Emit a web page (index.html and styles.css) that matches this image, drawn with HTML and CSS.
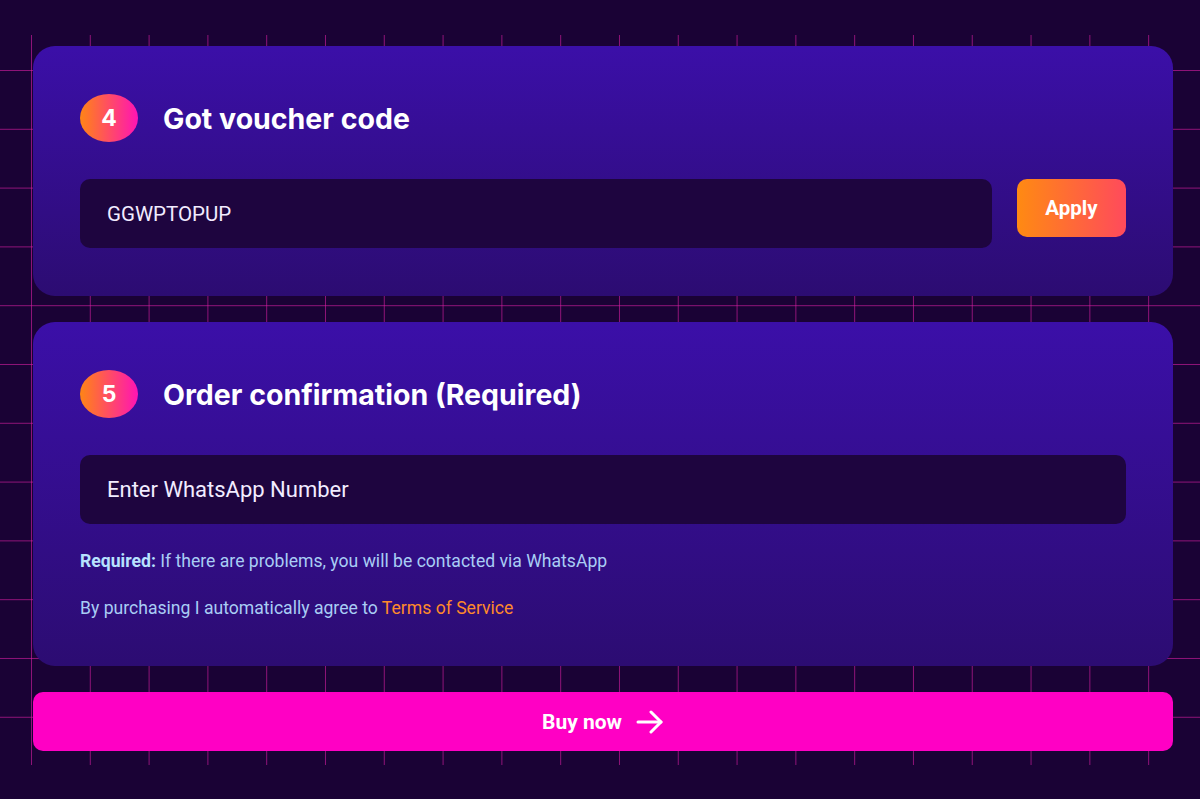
FILE: index.html
```html
<!DOCTYPE html>
<html lang="en">

<head>
    <meta charset="UTF-8">
    <title>Checkout</title>
    <meta name="viewport" content="width=device-width, initial-scale=1.0">
    <link rel="stylesheet" href="styles.css">
</head>

<body>
    <div class="grid-bg">
        <div class="checkout">
            <section class="card">
                <div class="step-head">
                    <span class="step-num">4</span>
                    <h2>Got voucher code</h2>
                </div>
                <div class="voucher-row">
                    <div class="field field-code">GGWPTOPUP</div>
                    <button class="btn-apply">Apply</button>
                </div>
            </section>

            <section class="card card-confirm">
                <div class="step-head">
                    <span class="step-num">5</span>
                    <h2>Order confirmation (Required)</h2>
                </div>
                <div class="field">Enter WhatsApp Number</div>
                <p class="note"><b>Required:</b> If there are problems, you will be contacted via WhatsApp</p>
                <p class="note">By purchasing I automatically agree to <a href="#">Terms of Service</a></p>
            </section>

            <button class="btn-buy">
                Buy now
                <svg width="28" height="24" viewBox="0 0 28 24" fill="none" stroke="#fff" stroke-width="3" stroke-linecap="round" stroke-linejoin="round">
                    <path d="M2 12h23" />
                    <path d="M15 2l10 10-10 10" />
                </svg>
            </button>
        </div>
    </div>
</body>
</html>
```

FILE: styles.css
```css
/* fondo oscuro general */
body, html {
margin: 0;
padding: 0;
background: #1a0235;
font-family: Roboto, "Liberation Sans", sans-serif;
}

/* cuadricula decorativa detras de las tarjetas */
.grid-bg {
margin-top: 35px;
height: 730px;
background-image:
    linear-gradient(to right, rgba(220, 30, 165, 0.6) 1px, transparent 1px),
    linear-gradient(to bottom, rgba(220, 30, 165, 0.6) 1px, transparent 1px);
background-size: 58.8px 58.8px;
background-position: 31px 35px;
}

.checkout {
display: flex;
flex-direction: column;
gap: 26px;
padding: 11px 27px 0 33px;
}

/* tarjeta de cada paso */
.card {
background: linear-gradient(to bottom, #3b0fa8, #2c0c72);
border-radius: 22px;
padding: 48px 47px;
}

.card-confirm {
padding-bottom: 46px;
}

.step-head {
display: flex;
align-items: center;
gap: 25px;
margin-bottom: 37px;
}

.step-num {
display: flex;
align-items: center;
justify-content: center;
width: 58px;
height: 48px;
border-radius: 50%;
background: linear-gradient(to right, #ff8515, #ff14b4);
color: #fff;
font-family: Inter, sans-serif;
font-weight: 700;
font-size: 23px;
}

.step-head h2 {
margin: 0;
color: #fff;
font-family: Inter, sans-serif;
font-weight: 700;
font-size: 28.5px;
}

.voucher-row {
display: flex;
align-items: flex-start;
gap: 25px;
}

.voucher-row .field {
flex: 1;
}

/* campos de texto */
.field {
height: 69px;
box-sizing: border-box;
display: flex;
align-items: center;
padding: 0 27px;
background: #1e053f;
border-radius: 10px;
color: #f2ecff;
font-size: 22px;
}

.field-code {
font-size: 20.5px;
}

.btn-apply {
width: 109px;
height: 58px;
border: none;
border-radius: 10px;
background: linear-gradient(to right, #ff8a12, #ff4a5c);
color: #fff;
font-family: Roboto, sans-serif;
font-weight: 700;
font-size: 20.5px;
cursor: pointer;
}

.note {
margin: 26px 0 0;
color: #a9cdf5;
font-size: 17.6px;
line-height: 23px;
}

.note + .note {
margin-top: 24px;
}

.note b {
color: #b8e2ff;
}

.note a {
color: #ff8a2a;
text-decoration: none;
}

/* boton de compra */
.btn-buy {
display: flex;
align-items: center;
justify-content: center;
gap: 14px;
height: 59px;
border: none;
border-radius: 10px;
background: #ff00c4;
color: #fff;
font-family: Roboto, sans-serif;
font-weight: 700;
font-size: 21px;
cursor: pointer;
}
```
